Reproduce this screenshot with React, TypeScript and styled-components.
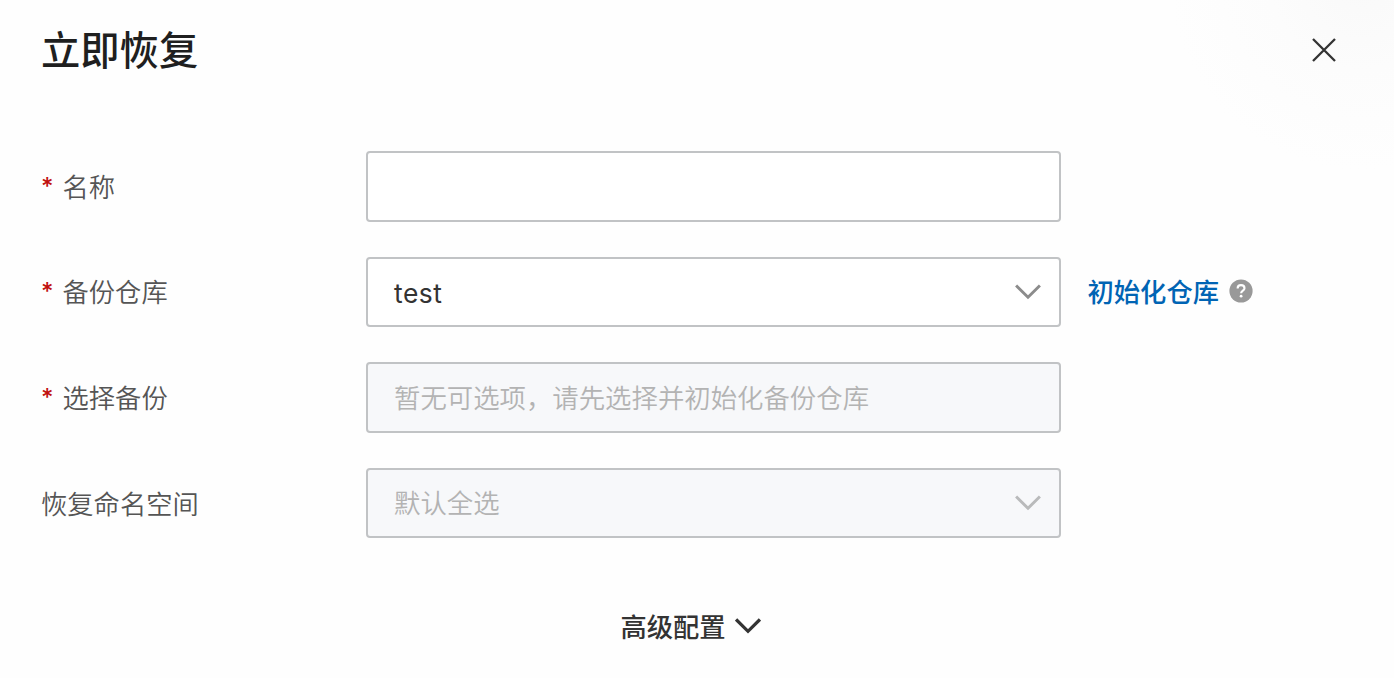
import styled, { createGlobalStyle } from "styled-components";

const App = () => {
  return (
    <>
      <GlobalStyle />
      <Container>
        <Header>
          <Title>立即恢复</Title>
          <CloseButton type="button" aria-label="关闭">
            <svg width="24" height="24" viewBox="0 0 24 24" fill="none">
              <path d="M1 1L23 23M23 1L1 23" stroke="#333" strokeWidth="2.3" />
            </svg>
          </CloseButton>
        </Header>
        <Form>
          <Row>
            <Label>
              <Required>*</Required>名称
            </Label>
            <Field />
          </Row>
          <Row>
            <Label>
              <Required>*</Required>备份仓库
            </Label>
            <Field>
              <Value>test</Value>
              <Chevron color="#8c8c8c" />
            </Field>
            <InitLink>初始化仓库</InitLink>
            <HelpIcon />
          </Row>
          <Row>
            <Label>
              <Required>*</Required>选择备份
            </Label>
            <Field $disabled>暂无可选项，请先选择并初始化备份仓库</Field>
          </Row>
          <Row>
            <Label>恢复命名空间</Label>
            <Field $disabled>
              默认全选
              <Chevron color="#b9babb" />
            </Field>
          </Row>
        </Form>
        <Advanced>
          <AdvancedText>高级配置</AdvancedText>
          <Chevron color="#333" strokeWidth={3.2} />
        </Advanced>
      </Container>
    </>
  );
};

export default App;

interface ChevronProps {
  color: string;
  strokeWidth?: number;
}

const Chevron = ({ color, strokeWidth = 2.9 }: ChevronProps) => (
  <svg width="26" height="16" viewBox="0 0 26 16" fill="none">
    <path d="M1.1 1.5L13 13.3L24.9 1.5" stroke={color} strokeWidth={strokeWidth} />
  </svg>
);

const HelpIcon = () => (
  <HelpSvg width="24" height="24" viewBox="0 0 24 24" fill="none">
    <circle cx="12" cy="12" r="11.6" fill="#999" />
    <path
      d="M8.6 9.4C8.6 7.4 10 6.1 12 6.1C14 6.1 15.5 7.4 15.5 9.2C15.5 11.6 12.1 11.7 12.1 14.3"
      stroke="#fff"
      strokeWidth="2.1"
    />
    <circle cx="12.1" cy="17.2" r="1.4" fill="#fff" />
  </HelpSvg>
);

const GlobalStyle = createGlobalStyle`
  body {
    margin: 0;
    background: #fefefe;
    font-family: Inter, "Noto Sans CJK SC", sans-serif;
  }
`;

const Container = styled.div`
  box-sizing: border-box;
  height: 678px;
  padding: 20px 58.5px 0 41px;
  overflow: hidden;
  background: radial-gradient(circle at 1360px -20px, #f9f9f9, #fcfcfc 90px, #fefefe 190px);
`;

const Header = styled.div`
  display: flex;
  justify-content: space-between;
  align-items: center;
  height: 60px;
`;

const Title = styled.div`
  padding-top: 2px;
  font-size: 39.3px;
  font-weight: 500;
  line-height: 60px;
  color: #1f1f1f;
`;

const CloseButton = styled.button`
  display: flex;
  padding: 0;
  border: none;
  background: none;
  cursor: pointer;
`;

const Form = styled.div`
  display: flex;
  flex-direction: column;
  gap: 35.2px;
  margin-top: 71.2px;
`;

const Row = styled.div`
  display: flex;
  align-items: center;
  height: 70.4px;
`;

const Label = styled.div`
  display: flex;
  width: 325px;
  padding-top: 3px;
  font-size: 26.3px;
  font-weight: 350;
  line-height: 40px;
  color: #555;
`;

const Required = styled.span`
  width: 21.5px;
  margin-top: -1px;
  font-size: 24px;
  font-weight: 500;
  color: #c01010;
`;

const Field = styled.div<{ $disabled?: boolean }>`
  display: flex;
  justify-content: space-between;
  align-items: center;
  box-sizing: border-box;
  width: 695px;
  height: 100%;
  padding: 0 18px 0 26px;
  border: 2px solid #c1c3c5;
  border-radius: 4px;
  background: ${({ $disabled }) => ($disabled ? "#f7f8fa" : "#fff")};
  font-size: 26.4px;
  font-weight: 350;
  line-height: 40px;
  color: ${({ $disabled }) => ($disabled ? "#b3b3b3" : "#333")};
`;

const Value = styled.span`
  padding-top: 2px;
  font-weight: 400;
  letter-spacing: 0.5px;
`;

const InitLink = styled.a`
  margin: 0 10.5px 0 26.5px;
  padding-top: 3px;
  font-size: 26.3px;
  font-weight: 500;
  line-height: 40px;
  color: #0064b4;
  cursor: pointer;
`;

const HelpSvg = styled.svg`
  margin-bottom: 2px;
`;

const Advanced = styled.div`
  display: flex;
  justify-content: center;
  align-items: center;
  gap: 9.5px;
  margin-top: 66.5px;
  padding-left: 5px;
`;

const AdvancedText = styled.span`
  padding-top: 3px;
  font-size: 26.3px;
  font-weight: 500;
  line-height: 40px;
  color: #333;
`;
